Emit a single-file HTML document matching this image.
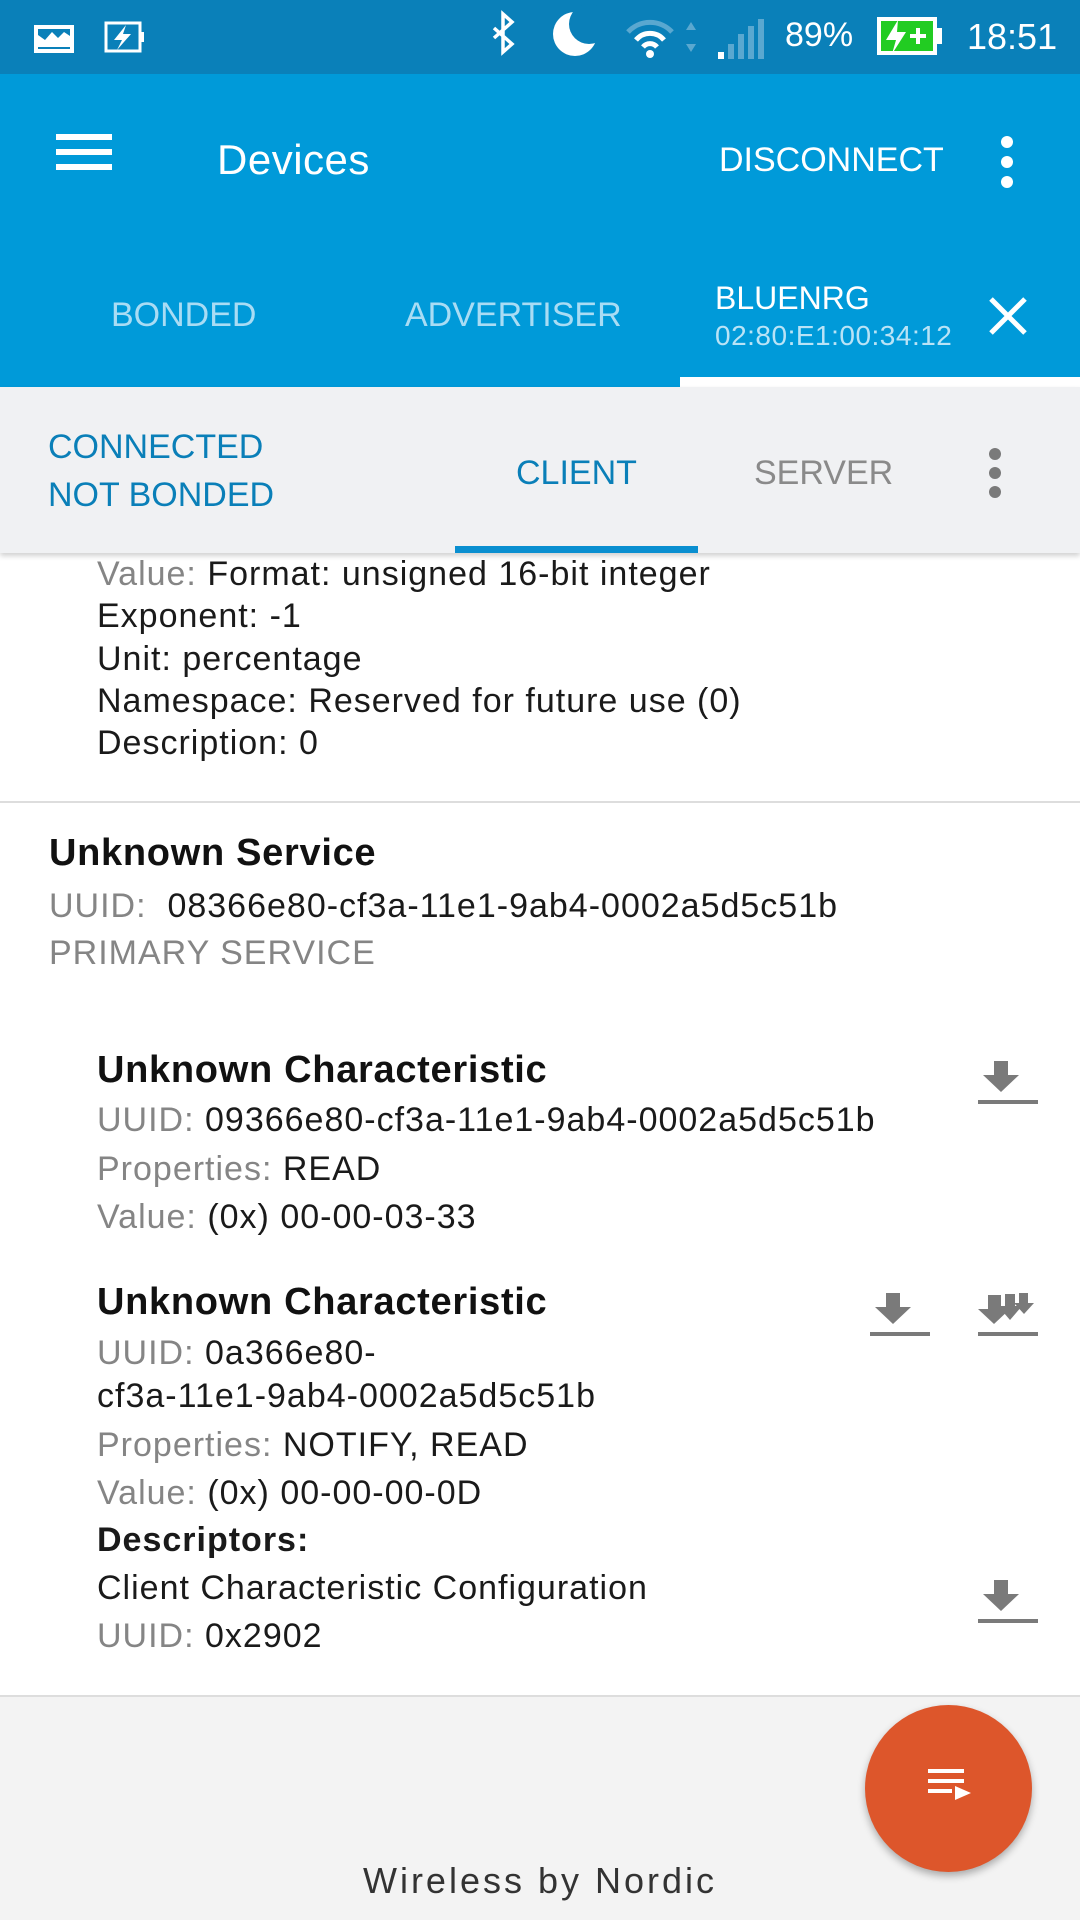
<!DOCTYPE html>
<html><head><meta charset="utf-8"><style>
*{margin:0;padding:0;box-sizing:border-box}
body{width:1080px;height:1920px;position:relative;overflow:hidden;background:#fff;font-family:"Liberation Sans",sans-serif;}
.a{position:absolute;white-space:nowrap}
.t{font-size:34px;letter-spacing:1px;color:#1a1a1a;line-height:42px;transform:translateY(-21px)}
.g{color:#858585}
.h{font-size:38px;letter-spacing:0.7px;font-weight:bold;color:#111;line-height:44px;transform:translateY(-22px)}
</style></head><body>
<div class="a" style="left:0;top:0;width:1080px;height:74px;background:#0a80b9"></div>
<svg class="a" style="left:0;top:0" width="1080" height="74">
<rect x="36" y="27" width="36" height="24" fill="none" stroke="#fff" stroke-width="4"/>
<path d="M38 47 L38 35 L45 40 L52 32 L58 38 L64 32 L70 36 L70 47Z" fill="#fff"/>
<rect x="106" y="23" width="34" height="28" fill="none" stroke="#fff" stroke-width="3"/><rect x="140" y="32" width="4" height="10" fill="#fff"/>
<path d="M126 25 L114 40 L122 40 L117 50 L131 34 L123 34 Z" fill="#fff"/>
<path d="M494 28 L512 44 L503 52 L503 14 L512 22 L494 38" fill="none" stroke="#fff" stroke-width="3.5"/>
<circle cx="575" cy="34" r="22" fill="#fff"/><circle cx="589" cy="24" r="20" fill="#0a80b9"/>
<path d="M628 32 A30 30 0 0 1 672 32" fill="none" stroke="#5aa8d0" stroke-width="5"/>
<path d="M636 40 A18 18 0 0 1 664 40" fill="none" stroke="#fff" stroke-width="5"/>
<path d="M643 47 A9 9 0 0 1 657 47" fill="none" stroke="#fff" stroke-width="5"/>
<circle cx="650" cy="54" r="4" fill="#fff"/>
<path d="M686 30 L691 22 L696 30Z M686 44 L691 52 L696 44Z" fill="#5aa8d0"/>
<rect x="718" y="52" width="6" height="7" fill="#fff"/>
<rect x="728" y="44" width="6" height="15" fill="#5aa8d0"/><rect x="738" y="34" width="6" height="25" fill="#5aa8d0"/><rect x="748" y="26" width="6" height="33" fill="#5aa8d0"/><rect x="758" y="19" width="6" height="40" fill="#5aa8d0"/>
<rect x="877" y="17" width="60" height="38" fill="#fff"/><rect x="881" y="21" width="52" height="30" fill="#22cc22"/><rect x="937" y="28" width="5" height="16" fill="#fff"/>
<path d="M898 20 L886 40 L896 40 L892 54 L906 32 L897 32Z" fill="#fff"/><path d="M910 36 h16 M918 28 v16" stroke="#fff" stroke-width="4"/>
</svg>
<div class="a" style="left:785px;top:16px;font-size:34px;color:#fff">89%</div>
<div class="a" style="left:967px;top:16px;font-size:36px;color:#fff">18:51</div>
<div class="a" style="left:0;top:74px;width:1080px;height:313px;background:#009ad9"></div>
<div class="a" style="left:56px;top:134px;width:56px;height:6px;background:#fff;box-shadow:0 15px 0 #fff,0 30px 0 #fff"></div>
<div class="a" style="left:217px;top:136px;font-size:42px;letter-spacing:0.5px;color:#fff">Devices</div>
<div class="a" style="left:719px;top:141px;font-size:34px;color:#fff">DISCONNECT</div>
<div class="a" style="left:1001px;top:136px;width:12px;height:12px;border-radius:6px;background:#fff;box-shadow:0 20px 0 #fff,0 40px 0 #fff"></div>
<div class="a" style="left:111px;top:296px;font-size:34px;color:#a9dcf4">BONDED</div>
<div class="a" style="left:405px;top:296px;font-size:34px;color:#a9dcf4">ADVERTISER</div>
<div class="a" style="left:715px;top:280px;font-size:32px;color:#fff">BLUENRG</div>
<div class="a" style="left:715px;top:320px;font-size:28px;letter-spacing:0.5px;color:#b9e3f6">02:80:E1:00:34:12</div>
<svg class="a" style="left:988px;top:296px" width="40" height="40"><path d="M3 3L37 37M37 3L3 37" stroke="#fff" stroke-width="5"/></svg>
<div class="a" style="left:680px;top:377px;width:400px;height:10px;background:#fff"></div>
<div class="a" style="left:0;top:387px;width:1080px;height:166px;background:#f0f1f3;box-shadow:0 3px 5px rgba(0,0,0,.18)"></div>
<div class="a" style="left:48px;top:428px;font-size:34px;color:#0a7fb8">CONNECTED</div>
<div class="a" style="left:48px;top:476px;font-size:34px;color:#0a7fb8">NOT BONDED</div>
<div class="a" style="left:516px;top:454px;font-size:34px;color:#0a7fb8">CLIENT</div>
<div class="a" style="left:754px;top:454px;font-size:34px;color:#8a8a8a">SERVER</div>
<div class="a" style="left:989px;top:448px;width:12px;height:12px;border-radius:6px;background:#7a7a7a;box-shadow:0 19px 0 #7a7a7a,0 38px 0 #7a7a7a"></div>
<div class="a" style="left:455px;top:546px;width:243px;height:7px;background:#0a8fd0"></div>
<div class="a t" style="left:97px;top:574px"><span class="g">Value: </span>Format: unsigned 16-bit integer</div>
<div class="a t" style="left:97px;top:616px">Exponent: -1</div>
<div class="a t" style="left:97px;top:659px">Unit: percentage</div>
<div class="a t" style="left:97px;top:701px">Namespace: Reserved for future use (0)</div>
<div class="a t" style="left:97px;top:743px">Description: 0</div>
<div class="a" style="left:0;top:801px;width:1080px;height:2px;background:#ddd"></div>
<div class="a h" style="left:49px;top:853px">Unknown Service</div>
<div class="a t" style="left:49px;top:906px"><span class="g">UUID:&nbsp; </span>08366e80-cf3a-11e1-9ab4-0002a5d5c51b</div>
<div class="a t g" style="left:49px;top:953px;color:#858585">PRIMARY SERVICE</div>
<div class="a h" style="left:97px;top:1070px">Unknown Characteristic</div>
<div class="a t" style="left:97px;top:1120px"><span class="g">UUID: </span>09366e80-cf3a-11e1-9ab4-0002a5d5c51b</div>
<div class="a t" style="left:97px;top:1169px"><span class="g">Properties: </span>READ</div>
<div class="a t" style="left:97px;top:1217px"><span class="g">Value: </span>(0x) 00-00-03-33</div>
<div class="a h" style="left:97px;top:1302px">Unknown Characteristic</div>
<div class="a t" style="left:97px;top:1353px"><span class="g">UUID: </span>0a366e80-</div>
<div class="a t" style="left:97px;top:1396px">cf3a-11e1-9ab4-0002a5d5c51b</div>
<div class="a t" style="left:97px;top:1445px"><span class="g">Properties: </span>NOTIFY, READ</div>
<div class="a t" style="left:97px;top:1493px"><span class="g">Value: </span>(0x) 00-00-00-0D</div>
<div class="a t" style="left:97px;top:1540px;font-weight:bold">Descriptors:</div>
<div class="a t" style="left:97px;top:1588px">Client Characteristic Configuration</div>
<div class="a t" style="left:97px;top:1636px"><span class="g">UUID: </span>0x2902</div>
<svg class="a" style="left:0;top:0" width="1080" height="1700">
<defs><g id="dl"><rect x="16" y="0" width="14" height="14" fill="#7a7a7a"/><path d="M5 14 H41 L23 31Z" fill="#7a7a7a"/><rect x="0" y="39" width="60" height="4" fill="#7a7a7a"/></g></defs>
<use href="#dl" transform="translate(978,1061)"/>
<use href="#dl" transform="translate(870,1293)"/>
<use href="#dl" transform="translate(978,1580)"/>
<g transform="translate(978,1293)" fill="#7a7a7a"><rect x="10" y="2" width="13" height="14"/><path d="M0 16 H32 L16 31Z"/><rect x="27" y="1" width="10" height="12"/><path d="M20 13 H44 L32 27Z"/><rect x="41" y="0" width="9" height="10"/><path d="M36 10 H56 L46 21Z"/><rect x="0" y="39" width="60" height="4"/></g>
</svg>
<div class="a" style="left:0;top:1695px;width:1080px;height:2px;background:#ddd"></div>
<div class="a" style="left:0;top:1697px;width:1080px;height:223px;background:#f3f3f3"></div>
<div class="a" style="left:0;top:1860px;width:1080px;text-align:center;font-size:36px;color:#333;letter-spacing:3px">Wireless by Nordic</div>
<div class="a" style="left:865px;top:1705px;width:167px;height:167px;border-radius:50%;background:#dd562b;box-shadow:0 4px 8px rgba(0,0,0,.3)"></div>
<svg class="a" style="left:925px;top:1765px" width="50" height="50"><rect x="3" y="4" width="36" height="4" fill="#fff"/><rect x="3" y="14" width="36" height="4" fill="#fff"/><rect x="3" y="24" width="24" height="4" fill="#fff"/><path d="M30 21 L46 28 L30 35Z" fill="#fff"/></svg>
</body></html>
